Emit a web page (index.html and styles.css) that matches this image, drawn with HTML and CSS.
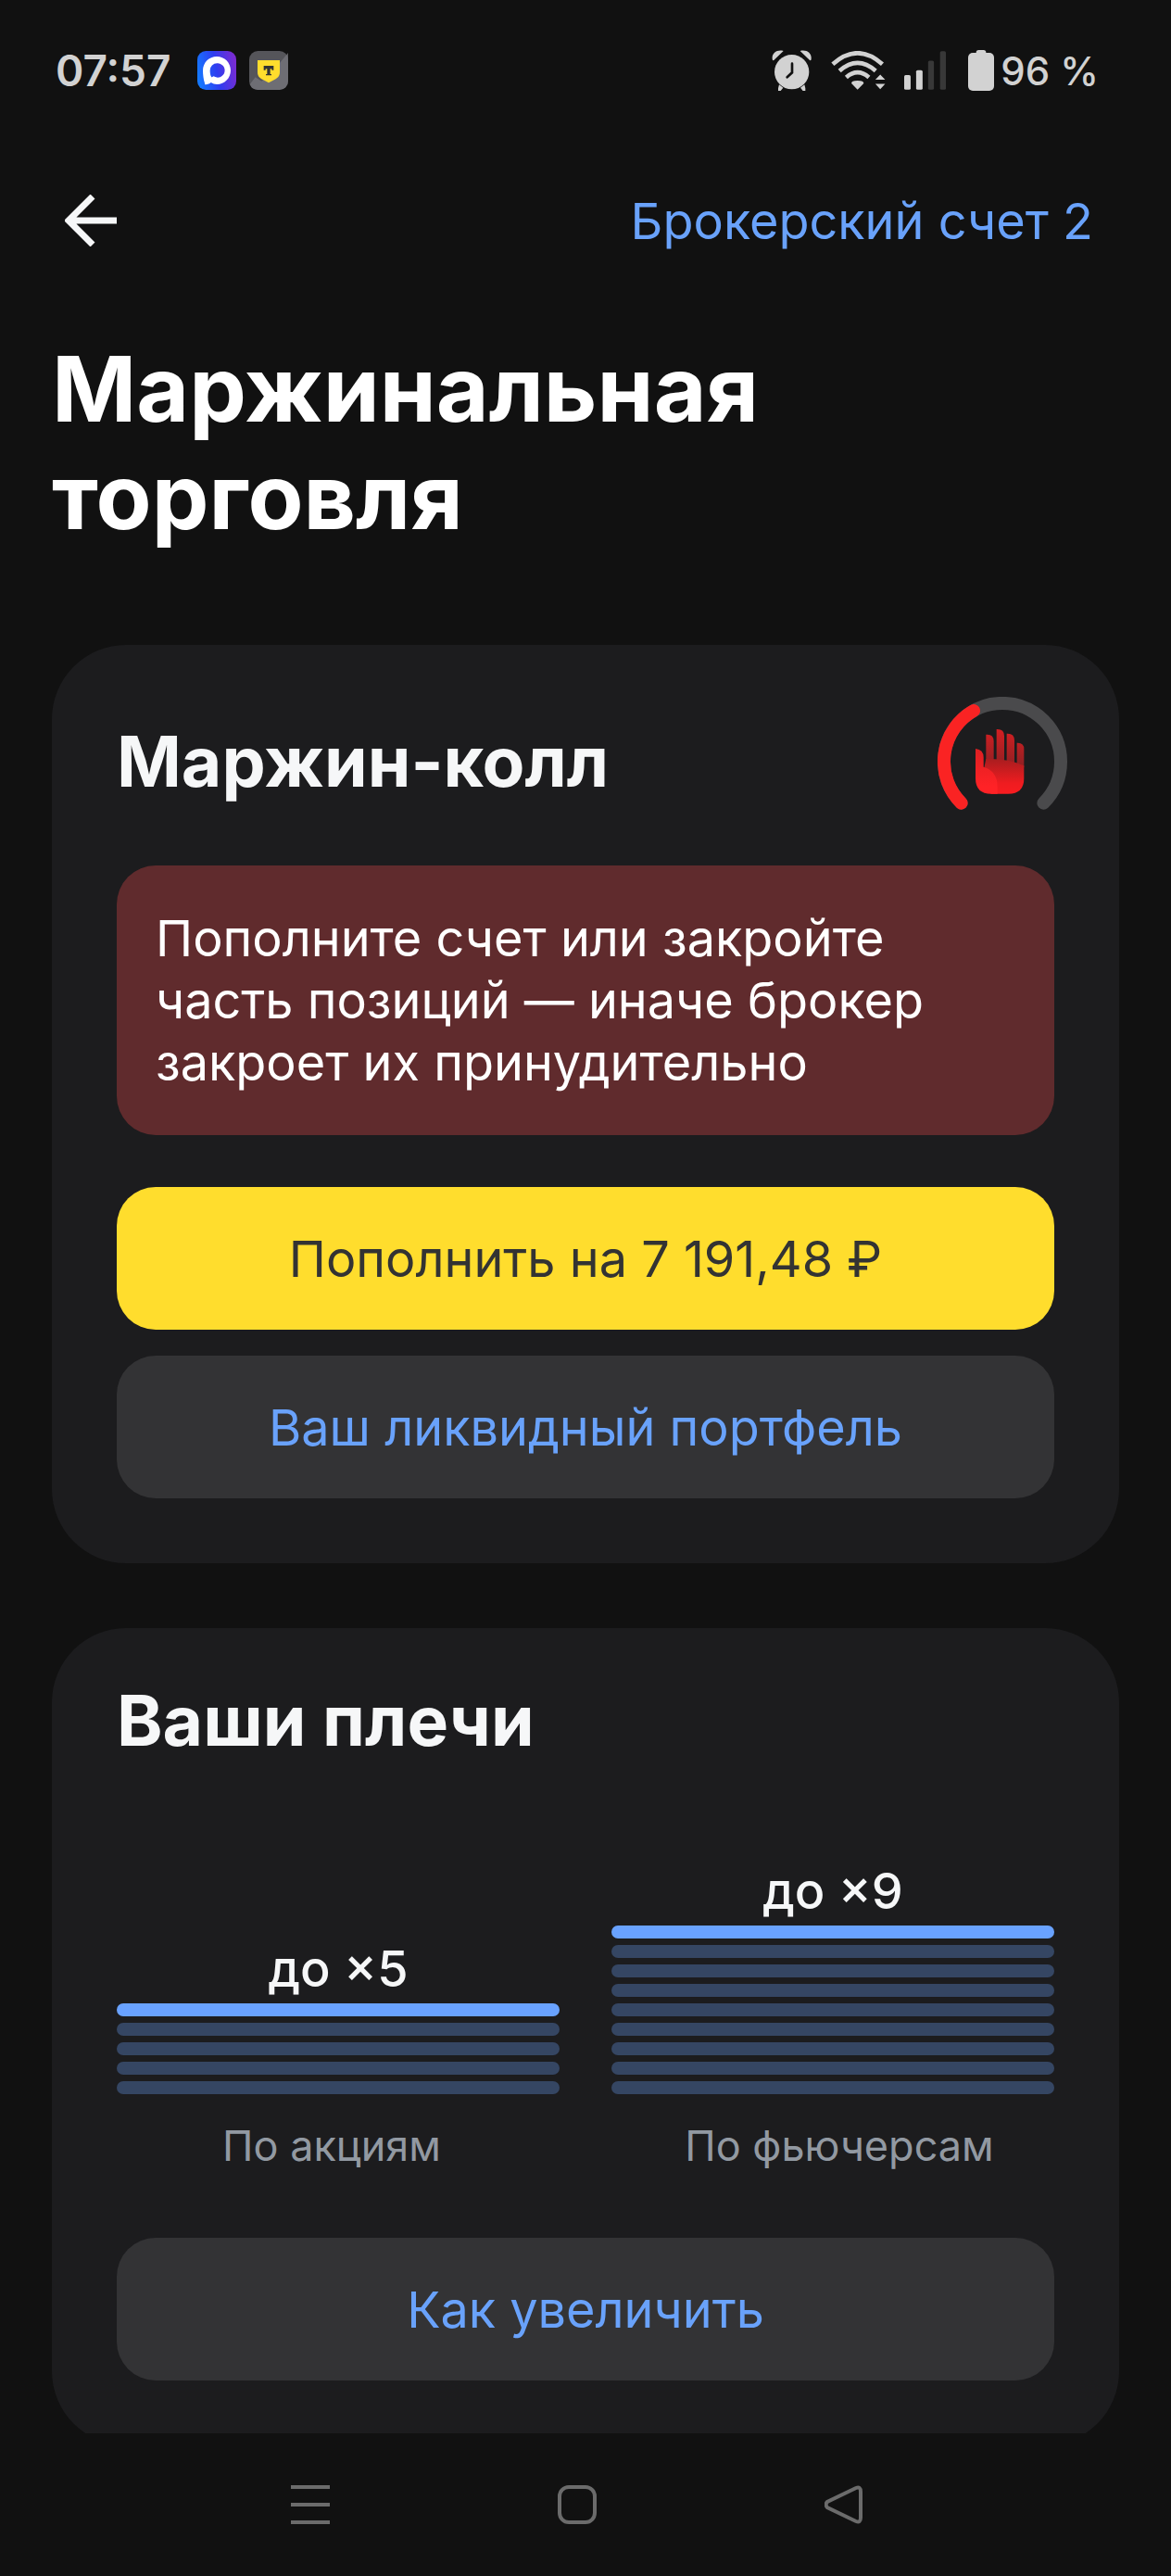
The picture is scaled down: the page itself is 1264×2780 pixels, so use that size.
FILE: index.html
```html
<!DOCTYPE html>
<html lang="ru">
<head>
    <meta charset="UTF-8">
    <meta name="viewport" content="width=device-width, initial-scale=1.0">
    <title>Маржинальная торговля</title>
    <link rel="stylesheet" href="styles.css">
</head>
<body>
    <div class="status-bar">
        <div class="status-left">
            <span class="time">07:57</span>
            <svg class="app-icon" viewBox="0 0 126 126">
                <defs>
                    <linearGradient id="chat-bg" x1="0" y1="0.6" x2="1" y2="0.4">
                        <stop offset="0" stop-color="#1479ff"/>
                        <stop offset="0.5" stop-color="#2f3df0"/>
                        <stop offset="1" stop-color="#7a2bd2"/>
                    </linearGradient>
                </defs>
                <rect width="126" height="126" rx="28" fill="url(#chat-bg)"/>
                <path fill="#fff" fill-rule="evenodd" d="M63 18c25 0 45 20 45 45s-20 45-44 45c-8 0-14-2-20-6-4 4-10 6-17 7-3 0-3-2-3-5-4-12-6-27-6-41 0-25 20-45 45-45zM64 40a23 23 0 0 0-23 23c0 8 1 17 5 22 3 0 5-2 7-3a23 23 0 1 0 11-42z"/>
            </svg>
            <svg class="app-icon" viewBox="0 0 126 126">
                <rect width="126" height="126" rx="28" fill="#55555a"/>
                <path fill="#77777d" d="M126 6v92a28 28 0 0 1-28 28H28A28 28 0 0 1 2 108L20 85 40 98 98 40z" opacity="0.75"/>
                <path fill="#ffdd2d" d="M27 30h72v38c0 14-8 20-16 24l-20 11-20-11c-8-4-16-10-16-24z"/>
                <path fill="#333" d="M47 48h32v14h-6v-4h-5v17h4v4H54v-4h4V58h-5v4h-6z"/>
            </svg>
        </div>
        <div class="status-right">
            <svg class="alarm" viewBox="0 0 132 132" fill="#d2d2d2">
                <circle cx="65" cy="71" r="56"/>
                <path d="M3 33C-3 14 14-3 38 3L6 34zM127 33C133 14 116-3 92 3l32 31zM24 112l13 10-8 10h-8v-8zM106 112l-13 10 8 10h8v-8z"/>
                <path d="M66 44v29L50 88" fill="none" stroke="#111" stroke-width="8" stroke-linecap="round"/>
            </svg>
            <svg class="wifi" viewBox="0 0 180 130">
                <g fill="none" stroke="#d2d2d2" stroke-width="14">
                    <path d="M5 43q81-72 162 0"/>
                    <path d="M27 65q59-52 118 0"/>
                    <path d="M49 86q37-32 74 0"/>
                </g>
                <path fill="#d2d2d2" d="M86 126 66 106q-1-9 20-9t20 9zM144 94l16-17 16 17zM144 107h32l-16 18z"/>
            </svg>
            <svg class="signal" viewBox="0 0 136 126">
                <rect y="78" width="21" height="48" rx="5" fill="#d2d2d2"/>
                <rect x="39" y="62" width="21" height="64" rx="5" fill="#d2d2d2"/>
                <rect x="78" y="31" width="19" height="95" rx="5" fill="#383838"/>
                <rect x="117" width="19" height="126" rx="5" fill="#383838"/>
            </svg>
            <svg class="battery" viewBox="0 0 84 132" fill="#d2d2d2">
                <rect x="26" width="32" height="20" rx="8"/>
                <rect y="9" width="84" height="123" rx="15"/>
            </svg>
            <span class="percent">96 %</span>
        </div>
    </div>

    <main class="screen">
        <header class="top-nav">
            <button class="back" type="button" aria-label="Назад">
                <svg viewBox="0 0 56 56" fill="none" stroke="#f6f7f8" stroke-width="7">
                    <path d="M56 28H6M30 2 4 28l26 26"/>
                </svg>
            </button>
            <a class="account" href="#">Брокерский счет 2</a>
        </header>

        <h1>Маржинальная торговля</h1>

        <section class="card">
            <div class="card-head">
                <h2>Маржин-колл</h2>
                <svg class="gauge" viewBox="0 0 420 420">
                    <defs>
                        <linearGradient id="finger" x1="0" y1="105" x2="0" y2="235" gradientUnits="userSpaceOnUse">
                            <stop offset="0" stop-color="#d41f22"/>
                            <stop offset="1" stop-color="#8a2023"/>
                        </linearGradient>
                        <linearGradient id="palm" x1="0" y1="200" x2="0" y2="314" gradientUnits="userSpaceOnUse">
                            <stop offset="0" stop-color="#a81d1f"/>
                            <stop offset="0.7" stop-color="#ef1c20"/>
                            <stop offset="1" stop-color="#f81c20"/>
                        </linearGradient>
                        <linearGradient id="thumb" x1="0" y1="168" x2="0" y2="290" gradientUnits="userSpaceOnUse">
                            <stop offset="0" stop-color="#dd1f22"/>
                            <stop offset="1" stop-color="#ff2226"/>
                        </linearGradient>
                    </defs>
                    <g fill="none" stroke-width="42" stroke-linecap="round">
                        <path stroke="#4a4a4c" d="M77 344A189 189 0 1 1 343 344"/>
                        <path stroke="#fa2323" d="M77 344A189 189 0 0 1 117 45"/>
                    </g>
                    <path fill="url(#finger)" d="M157 122h4q21 0 21 22v70l-25 20zM191 105h3q22 0 22 22v85h-25zM224 119h3q22 0 22 22v80h-25zM257 149h3q20 0 20 20v60h-23z"/>
                    <path fill="url(#palm)" d="M157 201q72-2 123 22v40q0 51-51 51h-56l-23-80z"/>
                    <path fill="url(#thumb)" d="M123 168q26 3 26 28v31q45 13 45 65v22h-20q-51 0-51-51z"/>
                </svg>
            </div>
            <p class="alert">Пополните счет или закройте часть позиций — иначе брокер закроет их принудительно</p>
            <div class="actions">
                <button class="btn btn-primary" type="button">Пополнить на 7 191,48 ₽</button>
                <button class="btn" type="button">Ваш ликвидный портфель</button>
            </div>
        </section>

        <section class="card">
            <h2>Ваши плечи</h2>
            <div class="chart">
                <div class="column">
                    <div class="value">до ×5</div>
                    <div class="bars">
                        <i></i><i></i><i></i><i></i><i></i>
                    </div>
                </div>
                <div class="column">
                    <div class="value">до ×9</div>
                    <div class="bars">
                        <i></i><i></i><i></i><i></i><i></i><i></i><i></i><i></i><i></i>
                    </div>
                </div>
            </div>
            <div class="labels">
                <span>По акциям</span>
                <span>По фьючерсам</span>
            </div>
            <button class="btn" type="button">Как увеличить</button>
        </section>
    </main>

    <nav class="system-nav">
        <button type="button" aria-label="Недавние">
            <svg viewBox="0 0 42 42"><path d="M0 2h42M0 21h42M0 40h42"/></svg>
        </button>
        <button type="button" aria-label="Домой">
            <svg viewBox="0 0 42 42"><rect x="2" y="2" width="38" height="38" rx="10"/></svg>
        </button>
        <button type="button" aria-label="Назад">
            <svg viewBox="0 0 42 42"><path d="M34 3 3 18q-3 3 0 6l31 15q5 2 5-4V7q0-6-5-4z"/></svg>
        </button>
    </nav>
</body>
</html>
```

FILE: styles.css
```css
* {
    box-sizing: border-box;
}
body {
    margin: 0;
    height: 100vh;
    display: flex;
    flex-direction: column;
    background-color: #111;
    color: #f6f7f8;
    font-family: 'Inter', 'Roboto', sans-serif;
    font-size: 54px;
}
button {
    font: inherit;
    color: inherit;
    border: none;
    background: none;
    padding: 0;
    cursor: pointer;
}
svg {
    display: block;
}
h1, h2, p {
    margin: 0;
}

/* status bar */
.status-bar {
    display: flex;
    flex: none;
    justify-content: space-between;
    align-items: center;
    height: 152px;
    padding: 0 78px 0 60px;
    color: #d2d2d2;
}
.status-left, .status-right {
    display: flex;
    align-items: center;
}
.time {
    font-size: 46px;
    font-weight: 600;
    margin-right: 28px;
}
.app-icon {
    width: 42px;
    height: 42px;
    margin-right: 14px;
}
.alarm {
    width: 44px;
    height: 44px;
    margin-right: 20px;
}
.wifi {
    width: 60px;
    height: 43px;
    margin-right: 19px;
}
.signal {
    width: 45px;
    height: 42px;
    margin-right: 24px;
}
.battery {
    width: 28px;
    height: 44px;
    margin-right: 7px;
}
.percent {
    font-size: 42px;
    font-weight: 500;
}

/* page */
.screen {
    flex: 1;
    min-height: 0;
    overflow-y: auto;
    scrollbar-width: none;
    padding: 0 56px;
}
.top-nav {
    display: flex;
    justify-content: space-between;
    align-items: center;
    height: 172px;
    padding: 0 28px 0 14px;
}
.back svg {
    width: 56px;
    height: 56px;
}
.account {
    color: #69a2fb;
    text-decoration: none;
}
h1 {
    max-width: 900px;
    margin: 38px 0 102px;
    color: #fff;
    font-size: 98px;
    font-weight: 700;
    line-height: 116px;
}
h2 {
    font-size: 75px;
    font-weight: 700;
    line-height: 88px;
}
.card {
    background-color: #1c1c1e;
    border-radius: 80px;
    padding: 56px 70px 70px;
    margin-bottom: 70px;
}
.card-head {
    display: flex;
    justify-content: space-between;
    align-items: center;
    margin: 0 -14px 42px 0;
}
.gauge {
    width: 140px;
    height: 140px;
}
.alert {
    background-color: #602b2d;
    border-radius: 42px;
    padding: 45px 42px;
    margin-bottom: 56px;
    color: #fff;
    line-height: 67px;
}
.actions {
    display: flex;
    flex-direction: column;
    gap: 28px;
}
.btn {
    width: 100%;
    height: 154px;
    border-radius: 42px;
    background-color: #333335;
    color: #69a2fb;
}
.btn-primary {
    background-color: #ffdd2d;
    color: #333;
}

/* leverage chart */
.chart, .labels {
    display: grid;
    grid-template-columns: 1fr 1fr;
    text-align: center;
}
.chart {
    align-items: end;
    gap: 56px;
    margin-top: 106px;
}
.value {
    font-weight: 500;
    line-height: 68px;
    margin-bottom: 3px;
}
.bars {
    display: flex;
    flex-direction: column;
    gap: 7px;
}
.bars i {
    height: 14px;
    border-radius: 7px;
    background-color: #354663;
}
.bars i:first-child {
    background-color: #69a2ff;
}
.labels {
    gap: 84px;
    margin: 26px 0 69px;
    color: #9299a2;
    font-size: 45px;
    line-height: 60px;
}

/* system buttons */
.system-nav {
    display: flex;
    flex: none;
    justify-content: center;
    align-items: center;
    gap: 246px;
    height: 154px;
    padding-right: 18px;
}
.system-nav svg {
    width: 42px;
    height: 42px;
    fill: none;
    stroke: #6b6b6b;
    stroke-width: 4;
}
```
